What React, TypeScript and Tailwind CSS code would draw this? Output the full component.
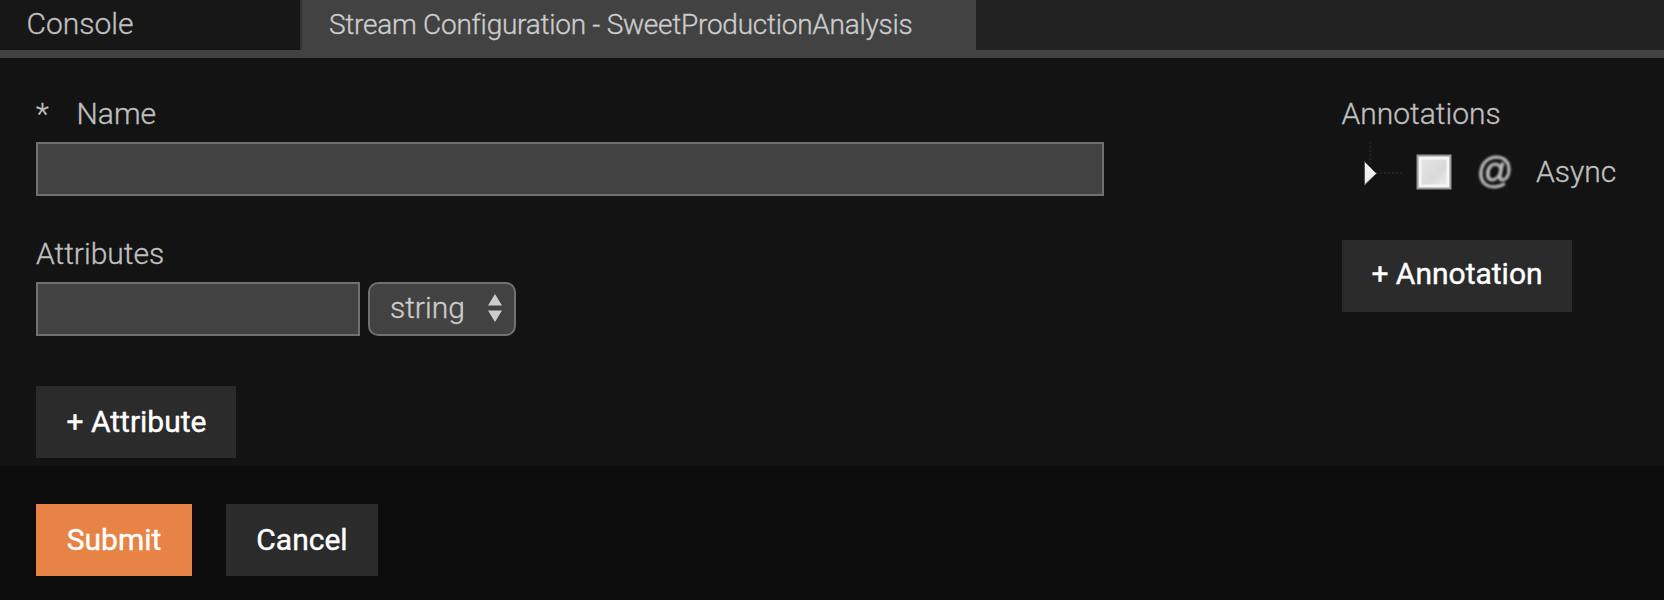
import React from "react";

const buttonBase =
  "flex h-[72px] items-center justify-center whitespace-nowrap text-[30px] font-normal leading-none text-white [-webkit-text-stroke:0.4px_#ffffff]";

function TabBar() {
  return (
    <div className="flex h-[58px] border-b-8 border-[#424242] bg-[#222222] font-light text-[#cccccc]">
      <div className="w-[302px] border-r-2 border-[#333333] bg-[#171717] pl-[26.5px] pt-[6px] text-[30px] leading-[36px] text-[#bfbfbf] [-webkit-text-stroke:0.35px_#bfbfbf]">
        Console
      </div>
      <div className="w-[674px] bg-[#424242] pl-[27px] pt-[7px] text-[28px] leading-[36px] tracking-[-0.26px] [-webkit-text-stroke:0.35px_#cccccc]">
        Stream Configuration - SweetProductionAnalysis
      </div>
    </div>
  );
}

function AnnotationNode() {
  return (
    <div className="flex h-[58px] items-center">
      <svg width="96" height="58" viewBox="0 0 96 58" className="ml-[20px] shrink-0">
        <defs>
          <linearGradient id="box" x1="0" y1="0" x2="1" y2="1">
            <stop offset="0" stopColor="#e6e6e6" />
            <stop offset="0.6" stopColor="#d9d9d9" />
            <stop offset="1" stopColor="#ececec" />
          </linearGradient>
          <filter id="soft">
            <feGaussianBlur stdDeviation="0.6" />
          </filter>
        </defs>
        <path d="M8.5 0v22M14 31h26" stroke="#202020" strokeWidth="2" strokeDasharray="2 2" />
        <g filter="url(#soft)">
          <path d="M2.5 19.5L14.5 31.5L2.5 43z" fill="#f0f0f0" stroke="#555" strokeWidth="1" />
          <rect x="54.5" y="12.5" width="35" height="35" fill="#969696" />
          <rect x="56.5" y="14.5" width="31" height="31" fill="#f6f6f6" />
          <rect x="59.5" y="17.5" width="25" height="25" fill="url(#box)" />
        </g>
      </svg>
      <span className="ml-[17px] w-[40px] text-center font-['Liberation_Sans',sans-serif] text-[36px] leading-none text-[#bdbdbd] blur-[0.8px] [-webkit-text-stroke:0.8px_#bdbdbd]">
        @
      </span>
      <span className="ml-[21px] pt-[2px] text-[30px] leading-[36px]">Async</span>
    </div>
  );
}

export default function App() {
  return (
    <div className="h-[600px] w-[1664px] overflow-hidden bg-[#0d0d0d] font-[Roboto,sans-serif]">
      <TabBar />
      <div className="flex h-[408px] bg-[#131313] px-9 pt-[38px] text-[30px] font-light leading-[36px] text-[#bfbfbf] [-webkit-text-stroke:0.35px_#bfbfbf]">
        <div className="w-[1306px]">
          <div className="flex h-[46px]">
            <span className="w-[40.5px]">*</span>
            <span>Name</span>
          </div>
          <div className="h-[54px] w-[1068px] border-2 border-[#707070] bg-[#424242]" />
          <div className="mt-[40px] h-[46px]">Attributes</div>
          <div className="flex gap-2">
            <div className="h-[54px] w-[324px] border-2 border-[#707070] bg-[#424242]" />
            <div className="flex h-[54px] w-[148px] items-center justify-between rounded-[10px] border-2 border-[#707070] bg-[#424242] pl-[20px] pr-[12px] text-[#cccccc]">
              <span className="pb-[2px] [-webkit-text-stroke:0.35px_#cccccc]">string</span>
              <svg width="14" height="28" viewBox="0 0 14 28" fill="#cccccc" className="mb-[2px]" stroke="none">
                <path d="M7 0L14 11.5H0zM7 28L0 16.5H14z" />
              </svg>
            </div>
          </div>
          <button className={`${buttonBase} mt-[50px] w-[200px] bg-[#2b2b2b] pl-px`}>+ Attribute</button>
        </div>
        <div>
          <div className="-ml-[0.5px] h-[46px]">Annotations</div>
          <AnnotationNode />
          <button className={`${buttonBase} mt-[40px] w-[230px] bg-[#2b2b2b] pb-1`}>+ Annotation</button>
        </div>
      </div>
      <div className="flex gap-[34px] px-9 pt-[38px]">
        <button className={`${buttonBase} w-[156px] bg-[#e78445]`}>Submit</button>
        <button className={`${buttonBase} w-[152px] bg-[#2b2b2b]`}>Cancel</button>
      </div>
    </div>
  );
}
